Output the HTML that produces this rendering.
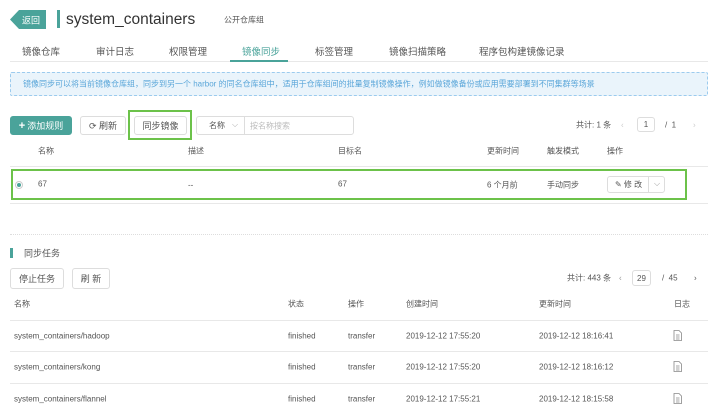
<!DOCTYPE html>
<html><head><meta charset="utf-8"><style>
*{margin:0;padding:0;box-sizing:border-box}
body{width:720px;height:411px;background:#fff;position:relative;overflow:hidden;font-family:"Liberation Sans","Noto Sans CJK SC",sans-serif;color:#555;font-size:8px}
.a{position:absolute;white-space:nowrap}
.btn{position:absolute;border:1px solid #ddd;border-radius:3px;background:#fff;display:flex;align-items:center;justify-content:center;font-size:9px;color:#555}
.line{position:absolute;height:1px;background:#e8e8e8}
.t{position:absolute;white-space:nowrap;transform:translateY(-50%)}
</style></head><body>
<svg class="a" style="left:10px;top:10px" width="37" height="20"><path d="M9 0H36V19H9L0 9.5Z" fill="#4aa39a"/></svg>
<div class="t" style="left:22px;top:20px;color:#fff;font-size:9px">返回</div>
<div class="a" style="left:57px;top:10px;width:3px;height:18px;background:#4aa39a"></div>
<div class="t" style="left:66px;top:20px;font-size:15.5px;color:#333">system_containers</div>
<div class="t" style="left:224px;top:20px;font-size:8px;color:#555">公开仓库组</div>

<div class="t" style="left:22px;top:51px;font-size:9.5px">镜像仓库</div>
<div class="t" style="left:96px;top:51px;font-size:9.5px">审计日志</div>
<div class="t" style="left:169px;top:51px;font-size:9.5px">权限管理</div>
<div class="t" style="left:242px;top:51px;font-size:9.5px;color:#4aa39a">镜像同步</div>
<div class="t" style="left:315px;top:51px;font-size:9.5px">标签管理</div>
<div class="t" style="left:389px;top:51px;font-size:9.5px">镜像扫描策略</div>
<div class="t" style="left:479px;top:51px;font-size:9.5px">程序包构建镜像记录</div>
<div class="line" style="left:10px;top:61px;width:698px"></div>
<div class="a" style="left:230px;top:60px;width:58px;height:2px;background:#4aa39a"></div>

<div class="a" style="left:10px;top:72px;width:698px;height:24px;background:#eaf4fb;border:1px dashed #9ccbee;border-radius:2px"></div>
<div class="t" style="left:23px;top:84px;color:#5aa6d9;font-size:8px">镜像同步可以将当前镜像仓库组，同步到另一个 harbor 的同名仓库组中，适用于仓库组间的批量复制镜像操作，例如做镜像备份或应用需要部署到不同集群等场景</div>

<div class="btn" style="left:10px;top:116px;width:62px;height:19px;background:#4aa39a;border-color:#4aa39a;color:#fff"><b style="margin-right:2px;font-size:11px">+</b>添加规则</div>
<div class="btn" style="left:80px;top:116px;width:46px;height:19px">⟳ 刷新</div>
<div class="a" style="left:128px;top:110px;width:64px;height:30px;border:2px solid #6cc24a"></div>
<div class="btn" style="left:134px;top:116px;width:53px;height:19px">同步镜像</div>
<div class="btn" style="left:196px;top:116px;width:158px;height:19px;justify-content:flex-start"><span style="margin-left:12px;font-size:8px">名称</span></div>
<div class="t" style="left:232px;top:125px;color:#aaa;font-size:8px">⌵</div>
<div class="a" style="left:244px;top:117px;width:1px;height:17px;background:#ddd"></div>
<div class="t" style="left:250px;top:126px;color:#bbb;font-size:8px">按名称搜索</div>
<div class="t" style="left:576px;top:125px">共计: 1 条</div>
<div class="t" style="left:621px;top:125px;color:#ccc">‹</div>
<div class="btn" style="left:637px;top:117px;width:18px;height:15px;font-size:8px">1</div>
<div class="t" style="left:665px;top:125px">/ &nbsp;1</div>
<div class="t" style="left:693px;top:125px;color:#ccc">›</div>

<div class="t" style="left:38px;top:151px">名称</div>
<div class="t" style="left:188px;top:151px">描述</div>
<div class="t" style="left:338px;top:151px">目标名</div>
<div class="t" style="left:487px;top:151px">更新时间</div>
<div class="t" style="left:547px;top:151px">触发模式</div>
<div class="t" style="left:607px;top:151px">操作</div>
<div class="line" style="left:10px;top:166px;width:698px"></div>
<div class="line" style="left:10px;top:203px;width:698px"></div>
<div class="a" style="left:11px;top:169px;width:676px;height:31px;border:2px solid #6cc24a"></div>
<div class="a" style="left:15px;top:181px;width:8px;height:8px;border:1px solid #ccc;border-radius:50%"><div style="width:4px;height:4px;margin:1px;border-radius:50%;background:#4aa39a"></div></div>
<div class="t" style="left:38px;top:184px">67</div>
<div class="t" style="left:188px;top:185px">--</div>
<div class="t" style="left:338px;top:184px">67</div>
<div class="t" style="left:487px;top:185px">6 个月前</div>
<div class="t" style="left:547px;top:185px">手动同步</div>
<div class="btn" style="left:607px;top:176px;width:58px;height:17px;justify-content:flex-start;font-size:8px"><span style="margin-left:7px">✎ 修 改</span></div>
<div class="a" style="left:648px;top:177px;width:1px;height:15px;background:#ddd"></div>
<div class="t" style="left:654px;top:184px;color:#999">⌵</div>

<div class="a" style="left:10px;top:234px;width:698px;border-top:1px dotted #ddd"></div>
<div class="a" style="left:10px;top:248px;width:3px;height:10px;background:#4aa39a"></div>
<div class="t" style="left:24px;top:253px;font-size:9px">同步任务</div>
<div class="btn" style="left:10px;top:268px;width:54px;height:21px">停止任务</div>
<div class="btn" style="left:72px;top:268px;width:38px;height:21px">刷 新</div>
<div class="t" style="left:567px;top:278px">共计: 443 条</div>
<div class="t" style="left:619px;top:278px;color:#999">‹</div>
<div class="btn" style="left:632px;top:270px;width:19px;height:16px;font-size:8px">29</div>
<div class="t" style="left:662px;top:278px">/ &nbsp;45</div>
<div class="t" style="left:694px;top:278px">›</div>

<div class="t" style="left:14px;top:304px">名称</div>
<div class="t" style="left:288px;top:304px">状态</div>
<div class="t" style="left:348px;top:304px">操作</div>
<div class="t" style="left:406px;top:304px">创建时间</div>
<div class="t" style="left:539px;top:304px">更新时间</div>
<div class="t" style="left:674px;top:304px">日志</div>
<div class="line" style="left:10px;top:320px;width:698px"></div>
<div class="line" style="left:10px;top:351px;width:698px"></div>
<div class="line" style="left:10px;top:383px;width:698px"></div>

<div class="t" style="left:14px;top:336px">system_containers/hadoop</div>
<div class="t" style="left:288px;top:336px">finished</div>
<div class="t" style="left:348px;top:336px">transfer</div>
<div class="t" style="left:406px;top:336px">2019-12-12 17:55:20</div>
<div class="t" style="left:539px;top:336px">2019-12-12 18:16:41</div>
<div class="t" style="left:14px;top:367px">system_containers/kong</div>
<div class="t" style="left:288px;top:367px">finished</div>
<div class="t" style="left:348px;top:367px">transfer</div>
<div class="t" style="left:406px;top:367px">2019-12-12 17:55:20</div>
<div class="t" style="left:539px;top:367px">2019-12-12 18:16:12</div>
<div class="t" style="left:14px;top:399px">system_containers/flannel</div>
<div class="t" style="left:288px;top:399px">finished</div>
<div class="t" style="left:348px;top:399px">transfer</div>
<div class="t" style="left:406px;top:399px">2019-12-12 17:55:21</div>
<div class="t" style="left:539px;top:399px">2019-12-12 18:15:58</div>
<svg class="a" style="left:673px;top:330px" width="9" height="11"><path d="M1 .5H6L8.5 3V10.5H1Z M3 5H6.5M3 7H6.5M3 9H6.5" fill="none" stroke="#888" stroke-width=".8"/></svg>
<svg class="a" style="left:673px;top:361px" width="9" height="11"><path d="M1 .5H6L8.5 3V10.5H1Z M3 5H6.5M3 7H6.5M3 9H6.5" fill="none" stroke="#888" stroke-width=".8"/></svg>
<svg class="a" style="left:673px;top:393px" width="9" height="11"><path d="M1 .5H6L8.5 3V10.5H1Z M3 5H6.5M3 7H6.5M3 9H6.5" fill="none" stroke="#888" stroke-width=".8"/></svg>
</body></html>
